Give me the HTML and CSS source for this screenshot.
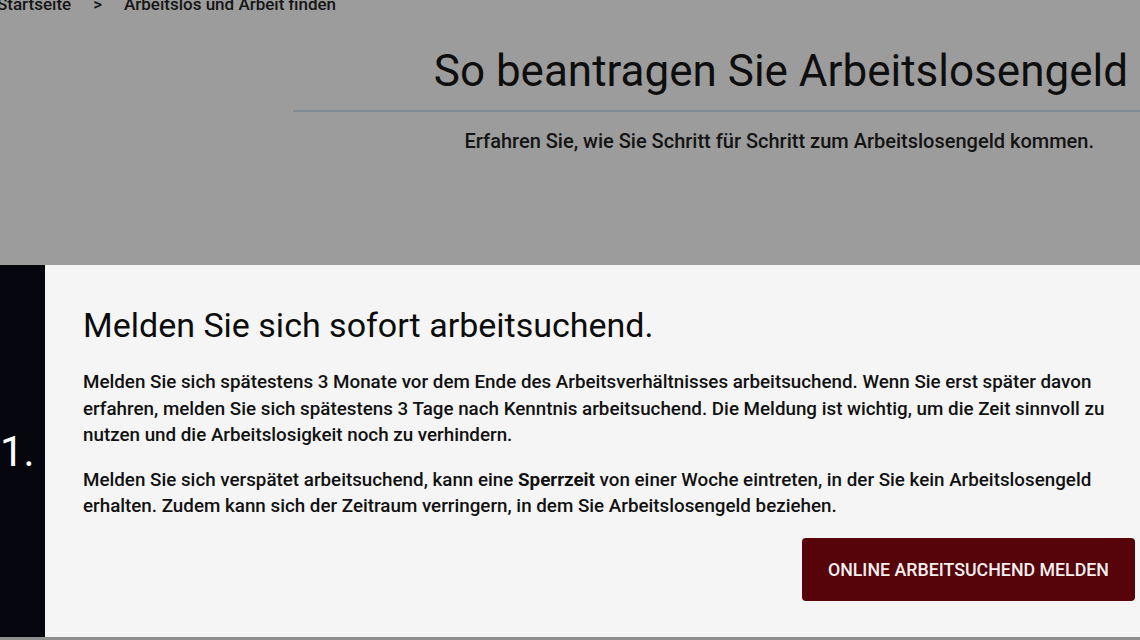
FILE: index.html
```html
<!DOCTYPE html>
<html>
<head>
    <title>So beantragen Sie Arbeitslosengeld</title>
    <link rel="stylesheet" href="styles.css">
</head>
<body>
    <div class="hero">
        <div class="breadcrumb">
            <span>Startseite</span>
            <span class="sep">&gt;</span>
            <span>Arbeitslos und Arbeit finden</span>
        </div>
        <div class="hero-box">
            <h1 class="hero-title">So beantragen Sie Arbeitslosengeld</h1>
            <div class="hero-line"></div>
            <p class="hero-sub">Erfahren Sie, wie Sie Schritt für Schritt zum Arbeitslosengeld kommen.</p>
        </div>
    </div>

    <div class="step">
        <div class="step-num">1.</div>
        <div class="step-card">
            <h2>Melden Sie sich sofort arbeitsuchend.</h2>
            <p>Melden Sie sich spätestens 3 Monate vor dem Ende des Arbeitsverhältnisses arbeitsuchend. Wenn Sie erst später davon erfahren, melden Sie sich spätestens 3 Tage nach Kenntnis arbeitsuchend. Die Meldung ist wichtig, um die Zeit sinnvoll zu nutzen und die Arbeitslosigkeit noch zu verhindern.</p>
            <p>Melden Sie sich verspätet arbeitsuchend, kann eine <b>Sperrzeit</b> von einer Woche eintreten, in der Sie kein Arbeitslosengeld erhalten. Zudem kann sich der Zeitraum verringern, in dem Sie Arbeitslosengeld beziehen.</p>
            <div class="step-actions">
                <a class="step-button" href="#">ONLINE ARBEITSUCHEND MELDEN</a>
            </div>
        </div>
    </div>
</body>
</html>
```

FILE: styles.css
```css
body {
    margin: 0;
    padding: 0;
    font-family: Roboto, "Liberation Sans", sans-serif;
    overflow: hidden;
    background-color: #a0a0a0;
    color: #111;
}

.hero {
    height: 265px;
    background-color: #9c9c9c;
    overflow: hidden;
}

.breadcrumb {
    display: flex;
    gap: 20px;
    margin: -6px 0 0 -3px;
    font-size: 17px;
    font-weight: 500;
    line-height: 20px;
    color: #151515;
}

.breadcrumb .sep {
    margin: 0 2px;
}

.hero-box {
    margin-left: 293px;
}

.hero-title {
    margin: 31px 0 0;
    padding-right: 12px;
    text-align: right;
    font-size: 44px;
    font-weight: 400;
    line-height: 52px;
    color: #0e0e0e;
}

.hero-line {
    height: 2px;
    margin-top: 13px;
    background-color: #7f8a93;
}

.hero-sub {
    margin: 16px 0 0;
    padding-right: 46px;
    text-align: right;
    font-size: 20px;
    font-weight: 500;
    line-height: 26px;
    color: #141414;
}

.step {
    display: flex;
    height: 372px;
    border-bottom: 3px solid #8e8e8e;
}

.step-num {
    width: 45px;
    flex-shrink: 0;
    display: flex;
    align-items: center;
    background-color: #05050d;
    color: #fff;
    font-size: 42px;
}

.step-card {
    flex-grow: 1;
    background-color: #f5f5f5;
    padding: 38px 5px 0 38px;
}

.step-card h2 {
    margin: 0 0 22px;
    font-size: 34px;
    font-weight: 400;
    line-height: 44px;
    color: #0c0c0c;
}

.step-card p {
    margin: 0 0 18px;
    padding-right: 20px;
    font-size: 18.8px;
    font-weight: 500;
    line-height: 26.5px;
    color: #111;
}

.step-card b {
    font-weight: 700;
}

.step-actions {
    display: flex;
    justify-content: flex-end;
    margin-top: 12px;
}

.step-button {
    display: block;
    padding: 21px 26px;
    background-color: #560409;
    color: #f4f0f0;
    border-radius: 4px;
    font-size: 17.8px;
    font-weight: 500;
    line-height: 21px;
    text-decoration: none;
}
```
